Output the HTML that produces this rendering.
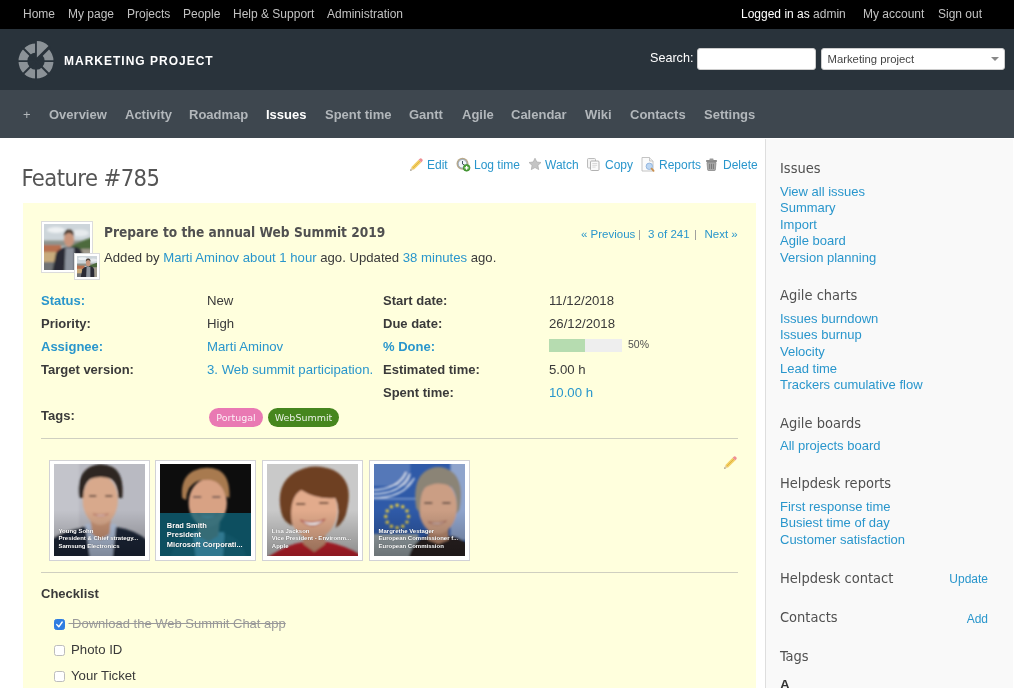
<!DOCTYPE html>
<html><head><meta charset="utf-8">
<style>
*{box-sizing:border-box}
html,body{margin:0;padding:0}
body{will-change:transform;width:1014px;height:688px;overflow:hidden;background:#fff;font-family:"Liberation Sans",Arial,sans-serif;font-size:13px;color:#333;position:relative}
a{color:#2996cc;text-decoration:none}
#top{position:absolute;left:0;top:0;width:1014px;height:29px;background:#000;color:#fff;font-size:12px}
#top a{color:#c2c2c2;position:absolute;top:7px;white-space:nowrap}
#top span{position:absolute;top:7px;white-space:nowrap}
#hdr{position:absolute;left:0;top:29px;width:1014px;height:61px;background:#29333b}
#hdr h1{position:absolute;left:64px;top:25px;margin:0;font-size:12px;font-weight:bold;color:#fff;letter-spacing:1px;white-space:nowrap;line-height:15px}
#menu{position:absolute;left:0;top:90px;width:1014px;height:48px;background:#3e474f}
#menu a{position:absolute;top:17px;color:#b2b7bb;font-weight:bold;font-size:13px;white-space:nowrap;line-height:16px}
#menu a.sel{color:#fff}
#side{position:absolute;left:765px;top:139px;width:248px;height:550px;background:#f9f9f9;border-left:1px solid #dedede}
#side h3{position:absolute;left:14px;margin:0;font-weight:normal;font-size:14.5px;color:#505050;white-space:nowrap;line-height:18px;font-family:"DejaVu Sans Condensed","Liberation Sans",sans-serif}
#side a{position:absolute;left:14px;font-size:13px;white-space:nowrap;line-height:16px}
h2{position:absolute;left:21.5px;top:163px;margin:0;font-weight:normal;font-size:23.5px;letter-spacing:-0.55px;color:#555;line-height:30px;font-family:"DejaVu Sans Condensed","Liberation Sans",sans-serif;white-space:nowrap}
#ctx a{position:absolute;top:158px;font-size:12px;white-space:nowrap;line-height:15px}
#issue{position:absolute;left:23px;top:203px;width:733px;height:485px;background:#ffffdd}
.abs{position:absolute;white-space:nowrap}
.lbl{font-weight:bold;font-size:13px;line-height:16px;color:#3a3a3a}
.val{font-size:13.2px;line-height:16px;color:#3a3a3a}
.tag{height:19.5px;border-radius:10px;color:rgba(255,255,255,.88);font-family:"DejaVu Sans",sans-serif;font-size:9.5px;line-height:20px;text-align:center}
.hr{left:18px;width:697px;height:1px;background:#cfcfc0}
.th{position:absolute;top:256.5px;width:100.5px;height:101px;background:#fff;border:1px solid #d2d2d6;padding:3.5px}
.th .ph{width:91.5px;height:92px;background:#999;overflow:hidden}
.th .cap{position:absolute;left:8.5px;bottom:9.5px;color:#fff;font-weight:bold;font-size:6px;line-height:7.5px;white-space:nowrap;text-shadow:0 0 1px rgba(0,0,0,.5)}
.cb{left:30.5px;width:11px;height:11px;border:1px solid #bdbdbd;border-radius:2.5px;background:#fff}
.cb.on{background:#2f7de1;border-color:#2f7de1}
.ic{position:absolute;display:block}
.nav{top:24px;font-size:11.5px;line-height:14px}
</style></head><body>
<div id="top">
<a style="left:23px">Home</a><a style="left:68px">My page</a><a style="left:127px">Projects</a><a style="left:183px">People</a><a style="left:233px">Help &amp; Support</a><a style="left:327px">Administration</a>
<span style="left:741px">Logged in as <a style="position:static">admin</a></span><a style="left:863px">My account</a><a style="left:938px">Sign out</a>
</div>
<div id="hdr">
<svg style="position:absolute;left:14px;top:10px" width="44" height="44" viewBox="-22 -22.1 44 44">
<path d="M12.37,-12.37 A17.5,17.5 0 0 1 17.50,-0.00 L8.70,-0.00 A8.7,8.7 0 0 0 6.15,-6.15 Z M17.50,-0.00 A17.5,17.5 0 0 1 12.37,12.37 L6.15,6.15 A8.7,8.7 0 0 0 8.70,-0.00 Z M12.37,12.37 A17.5,17.5 0 0 1 0.00,17.50 L0.00,8.70 A8.7,8.7 0 0 0 6.15,6.15 Z M0.00,17.50 A17.5,17.5 0 0 1 -12.37,12.37 L-6.15,6.15 A8.7,8.7 0 0 0 0.00,8.70 Z M-12.37,12.37 A17.5,17.5 0 0 1 -17.50,0.00 L-8.70,0.00 A8.7,8.7 0 0 0 -6.15,6.15 Z M-17.50,0.00 A17.5,17.5 0 0 1 -12.37,-12.37 L-6.15,-6.15 A8.7,8.7 0 0 0 -8.70,0.00 Z M-12.37,-12.37 A17.5,17.5 0 0 1 -0.00,-17.50 L-0.00,-8.70 A8.7,8.7 0 0 0 -6.15,-6.15 Z" fill="#8b9297"/>
<g stroke="#29333b" stroke-width="1.9"><line x1="0.00" y1="-20.00" x2="-0.00" y2="20.00"/><line x1="14.14" y1="-14.14" x2="-14.14" y2="14.14"/><line x1="20.00" y1="-0.00" x2="-20.00" y2="0.00"/><line x1="14.14" y1="14.14" x2="-14.14" y2="-14.14"/></g>
<path d="M0.90,-3.60 L0.90,-20.00 A16.4,16.4 0 0 1 12.50,-15.20 Z" fill="#8b9297"/>
</svg>
<h1>MARKETING PROJECT</h1>
<div class="abs" style="left:650px;top:21px;color:#fff;font-size:12.6px;line-height:16px">Search:</div>
<div class="abs" style="left:697px;top:19px;width:119px;height:22px;background:#fff;border-radius:3px;border:1px solid #ccc"></div>
<div class="abs" style="left:820.5px;top:19px;width:184px;height:22px;background:#fff;border-radius:3px;border:1px solid #ccc;font-size:11.3px;color:#444;padding:3px 0 0 6px;line-height:14px">Marketing project</div>
<div class="abs" style="left:991px;top:28px;width:0;height:0;border-left:4px solid transparent;border-right:4px solid transparent;border-top:4.5px solid #888"></div>
</div>
<div id="menu">
<a style="left:23px;font-weight:normal">+</a><a style="left:49px">Overview</a><a style="left:125px">Activity</a><a style="left:189px">Roadmap</a><a class="sel" style="left:266px">Issues</a><a style="left:325px">Spent time</a><a style="left:409px">Gantt</a><a style="left:462px">Agile</a><a style="left:511px">Calendar</a><a style="left:585px">Wiki</a><a style="left:630px">Contacts</a><a style="left:704px">Settings</a>
</div>
<h2>Feature #785</h2>
<div id="ctx">
<svg class="ic" style="left:409px;top:157px" width="15" height="15" viewBox="0 0 15 15"><path d="M2.2,10.2 L9.6,2.8 L12.2,5.4 L4.8,12.8 Z" fill="#f3cf62"/><path d="M9.6,2.8 L11,1.4 Q11.9,0.8 12.8,1.7 L13.3,2.2 Q14.1,3.1 13.5,4 L12.2,5.4 Z" fill="#ee8f94"/><path d="M2.2,10.2 L4.8,12.8 L1.2,13.8 Z" fill="#e8d3a8"/><path d="M1.2,13.8 L1.7,12.2 L2.8,13.3Z" fill="#666"/><path d="M3.5,11.5 L10.9,4.1" stroke="#d9a93a" stroke-width=".8"/></svg>
<svg class="ic" style="left:456px;top:157px" width="15" height="15" viewBox="0 0 15 15"><circle cx="6.5" cy="6.8" r="6" fill="#b9a98a"/><circle cx="6.5" cy="6.8" r="4.3" fill="#f2f6fa" stroke="#8fa5c0" stroke-width=".8"/><path d="M6.5,4 V7 L8.5,8" stroke="#456" stroke-width="1" fill="none"/><circle cx="10.6" cy="10.8" r="3.4" fill="#4da33a" stroke="#2f7d22" stroke-width=".6"/><path d="M10.6,8.9 V12.7 M8.7,10.8 H12.5" stroke="#fff" stroke-width="1.3"/></svg>
<svg class="ic" style="left:528px;top:157px" width="14" height="14" viewBox="0 0 14 14"><path d="M7,1.2 L8.8,5 L13,5.5 L9.9,8.4 L10.7,12.6 L7,10.5 L3.3,12.6 L4.1,8.4 L1,5.5 L5.2,5 Z" fill="#c4c4c4" stroke="#aaa" stroke-width=".7" stroke-linejoin="round"/></svg>
<svg class="ic" style="left:586px;top:157px" width="15" height="15" viewBox="0 0 15 15"><rect x="1.5" y="1.5" width="8" height="9.5" rx="1" fill="#f4f4f4" stroke="#b5b5b5" stroke-width=".9"/><rect x="4.5" y="4" width="8.5" height="9.5" rx="1" fill="#fafafa" stroke="#a9a9a9" stroke-width=".9"/><path d="M6.3,6.5 H11.2 M6.3,8.3 H11.2 M6.3,10.1 H9.5" stroke="#d0d0d0" stroke-width=".8"/></svg>
<svg class="ic" style="left:640px;top:156px" width="16" height="17" viewBox="0 0 16 17"><path d="M2,1.5 H9.5 L13,5 V15 H2 Z" fill="#fbfbfb" stroke="#bdbdbd" stroke-width=".9"/><path d="M9.5,1.5 V5 H13" fill="#eee" stroke="#bdbdbd" stroke-width=".8"/><circle cx="9.3" cy="10.3" r="3.2" fill="#bcd6f2" stroke="#8fb2dc" stroke-width=".9"/><path d="M11.6,12.7 L13.6,14.9" stroke="#c98f4e" stroke-width="1.8" stroke-linecap="round"/></svg>
<svg class="ic" style="left:705px;top:158px" width="13" height="13" viewBox="0 0 13 13"><rect x="1" y="2" width="11" height="2" rx=".8" fill="#8a8a8a"/><rect x="4.5" y=".6" width="4" height="1.8" rx=".6" fill="#999"/><path d="M2,4.5 H11 L10.3,12 Q10.2,12.5 9.6,12.5 H3.4 Q2.8,12.5 2.7,12 Z" fill="#a9a9a9" stroke="#808080" stroke-width=".7"/><path d="M4.6,5.8 V11 M6.5,5.8 V11 M8.4,5.8 V11" stroke="#6f6f6f" stroke-width=".8"/></svg>

<a style="left:427px">Edit</a><a style="left:474px">Log time</a><a style="left:545px">Watch</a><a style="left:605px">Copy</a><a style="left:659px">Reports</a><a style="left:723px">Delete</a>
</div>
<div id="issue">
<!-- avatar -->
<div class="abs" style="left:18px;top:18px;width:52px;height:52px;background:#fff;border:1px solid #dcdcdc;padding:2px">
<svg width="46" height="46" viewBox="0 0 46 46" style="display:block"><defs><filter id="bl"><feGaussianBlur stdDeviation="0.8"/></filter></defs>
<rect width="46" height="46" fill="#cdd5da"/>
<g filter="url(#bl)">
<ellipse cx="12" cy="6" rx="9" ry="3" fill="#eef1f3"/><ellipse cx="36" cy="9" rx="9" ry="3.5" fill="#e6eaed"/>
<rect x="-3" y="16.5" width="52" height="6" fill="#8f938d"/>
<path d="M27,22 Q36,17 49,13 L49,26 L27,26 Z" fill="#4d6b3e"/>
<rect x="-3" y="21" width="20" height="9" fill="#b86f50"/>
<rect x="-3" y="28" width="16" height="12" fill="#c8ab7c"/>
<rect x="-3" y="38" width="16" height="11" fill="#6f7274"/>
<rect x="36" y="25" width="13" height="24" fill="#a09a8c"/>
<path d="M8,49 L12,29 Q16,23.5 23,23 L33,23 Q38,25 38.5,30 L39,49 Z" fill="#2a2c34"/>
<path d="M21.5,24 L20.5,49 L30,49 L30,24 Z" fill="#8d939d"/>
<ellipse cx="25" cy="15.5" rx="5" ry="7" fill="#c9957c"/>
<path d="M19.8,12.5 Q19.5,5.5 25,5.5 Q30.8,5.5 30.2,12.5 Q28,9 25,9 Q22,9 19.8,12.5Z" fill="#4a3a30"/>
</g></svg></div>
<div class="abs" style="left:51px;top:50px;width:26px;height:26.5px;background:#fff;border:1px solid #dcdcdc;padding:1.75px">
<svg width="20.5" height="21" viewBox="0 0 46 46" preserveAspectRatio="none" style="display:block">
<rect width="46" height="46" fill="#cdd5da"/>
<defs><filter id="bl2"><feGaussianBlur stdDeviation="1.6"/></filter></defs><g filter="url(#bl2)">
<ellipse cx="12" cy="6" rx="9" ry="3" fill="#eef1f3"/><ellipse cx="36" cy="9" rx="9" ry="3.5" fill="#e6eaed"/>
<rect x="-3" y="16.5" width="52" height="6" fill="#8f938d"/>
<path d="M27,22 Q36,17 49,13 L49,26 L27,26 Z" fill="#4d6b3e"/>
<rect x="-3" y="21" width="20" height="9" fill="#b86f50"/>
<rect x="-3" y="28" width="16" height="12" fill="#c8ab7c"/>
<rect x="-3" y="38" width="16" height="11" fill="#6f7274"/>
<rect x="36" y="25" width="13" height="24" fill="#a09a8c"/>
<path d="M8,49 L12,29 Q16,23.5 23,23 L33,23 Q38,25 38.5,30 L39,49 Z" fill="#2a2c34"/>
<path d="M21.5,24 L20.5,49 L30,49 L30,24 Z" fill="#8d939d"/>
<ellipse cx="25" cy="15.5" rx="5" ry="7" fill="#c9957c"/>
<path d="M19.8,12.5 Q19.5,5.5 25,5.5 Q30.8,5.5 30.2,12.5 Q28,9 25,9 Q22,9 19.8,12.5Z" fill="#4a3a30"/>
</g></svg></div>
<div class="abs" style="left:81px;top:20px;font-family:'DejaVu Sans Condensed','Liberation Sans',sans-serif;font-weight:bold;font-size:13.6px;color:#505050;line-height:18px">Prepare to the annual Web Summit 2019</div>
<div class="abs" style="left:81px;top:47px;font-size:13.15px;line-height:16px;color:#3a3a3a">Added by <a>Marti Aminov</a> <a>about 1 hour</a> ago. Updated <a>38 minutes</a> ago.</div>
<div class="abs nav" style="left:558px"><a>« Previous</a></div><div class="abs nav" style="left:615px;color:#999">|</div><div class="abs nav" style="left:625px"><a>3 of 241</a></div><div class="abs nav" style="left:671px;color:#999">|</div><div class="abs nav" style="left:681.5px"><a>Next »</a></div>
<!-- attributes -->
<div class="abs lbl" style="left:18px;top:90px"><a>Status:</a></div><div class="abs val" style="left:184px;top:90px">New</div>
<div class="abs lbl" style="left:18px;top:113px">Priority:</div><div class="abs val" style="left:184px;top:113px">High</div>
<div class="abs lbl" style="left:18px;top:136px"><a>Assignee:</a></div><div class="abs val" style="left:184px;top:136px"><a>Marti Aminov</a></div>
<div class="abs lbl" style="left:18px;top:159px">Target version:</div><div class="abs val" style="left:184px;top:159px"><a>3. Web summit participation.</a></div>
<div class="abs lbl" style="left:18px;top:205px">Tags:</div>
<div class="abs lbl" style="left:360px;top:90px">Start date:</div><div class="abs val" style="left:526px;top:90px">11/12/2018</div>
<div class="abs lbl" style="left:360px;top:113px">Due date:</div><div class="abs val" style="left:526px;top:113px">26/12/2018</div>
<div class="abs lbl" style="left:360px;top:136px"><a>% Done:</a></div>
<div class="abs" style="left:525.5px;top:135.5px;width:73.5px;height:13px;background:#eee"><div style="width:36.5px;height:13px;background:#b6dcb0"></div></div>
<div class="abs" style="left:605px;top:135px;font-size:10.5px;line-height:12px;color:#505050">50%</div>
<div class="abs lbl" style="left:360px;top:159px">Estimated time:</div><div class="abs val" style="left:526px;top:159px">5.00 h</div>
<div class="abs lbl" style="left:360px;top:182px">Spent time:</div><div class="abs val" style="left:526px;top:182px"><a>10.00 h</a></div>
<div class="abs tag" style="left:186px;top:204.5px;width:54px;background:#e979b3">Portugal</div>
<div class="abs tag" style="left:245px;top:204.5px;width:71px;background:#46861e">WebSummit</div>
<div class="abs hr" style="top:235px"></div>
<!-- thumbs -->
<svg class="ic" style="left:700px;top:251.5px" width="15" height="15" viewBox="0 0 15 15"><path d="M2.2,10.2 L9.6,2.8 L12.2,5.4 L4.8,12.8 Z" fill="#f3cf62"/><path d="M9.6,2.8 L11,1.4 Q11.9,0.8 12.8,1.7 L13.3,2.2 Q14.1,3.1 13.5,4 L12.2,5.4 Z" fill="#ee8f94"/><path d="M2.2,10.2 L4.8,12.8 L1.2,13.8 Z" fill="#e8d3a8"/><path d="M1.2,13.8 L1.7,12.2 L2.8,13.3Z" fill="#666"/><path d="M3.5,11.5 L10.9,4.1" stroke="#d9a93a" stroke-width=".8"/></svg>
<div class="th" style="left:26px"><div class="ph"><svg width="91.5" height="92" viewBox="0 0 91 92" preserveAspectRatio="none" style="display:block"><defs><filter id="b2" x="-10%" y="-10%" width="120%" height="120%"><feGaussianBlur stdDeviation="1.1"/></filter><linearGradient id="dk" x1="0" y1="0" x2="0" y2="1"><stop offset=".5" stop-color="#000" stop-opacity="0"/><stop offset="1" stop-color="#000" stop-opacity=".3"/></linearGradient></defs>
<rect width="91" height="92" fill="#b9bac2"/>
<g filter="url(#b2)">
<rect x="-5" y="-5" width="30" height="80" fill="#c3c4cb"/>
<path d="M-4,96 L-4,76 Q10,66 30,63 L62,63 Q82,66 95,78 L95,96 Z" fill="#1e2638"/>
<path d="M31,60 L36,96 L58,96 L62,60 Z" fill="#b4c3dc"/>
<path d="M36,52 L38,70 L46,76 L55,70 L57,52 Z" fill="#c99476"/>
<ellipse cx="46" cy="36" rx="17.5" ry="25" fill="#d8a98c"/>
<path d="M25,34 Q22,12 34,4 Q46,-3 58,3 Q70,9 68,34 L64,34 Q64,20 57,15 Q46,11 36,15 Q29,20 29,34 Z" fill="#2d2522"/>
<path d="M39,50 Q46.5,55 54,50 Q46.5,52 39,50Z" fill="#fff" stroke="#b46a5a" stroke-width=".8"/>
<path d="M35,32 h7 M51,32 h7" stroke="#4a342c" stroke-width="1.4"/>
</g><rect width="91" height="92" fill="url(#dk)"/></svg></div><div class="cap">Young Sohn<br>President &amp; Chief strategy...<br>Samsung Electronics</div></div>
<div class="th" style="left:132.3px"><div class="ph"><svg width="91.5" height="92" viewBox="0 0 91 92" preserveAspectRatio="none" style="display:block">
<rect width="91" height="92" fill="#0d0d0d"/>
<g filter="url(#b2)">
<path d="M10,96 Q14,74 34,70 L64,70 Q82,74 86,96 Z" fill="#23262c"/>
<path d="M33,68 L36,96 L62,96 L64,68 Z" fill="#a9c4e2"/>
<path d="M37,54 L38,72 L48,78 L58,72 L60,54 Z" fill="#c48c70"/>
<ellipse cx="47.5" cy="39" rx="19" ry="24" fill="#d8a284"/>
<path d="M22,34 Q20,14 33,7 Q46,1 58,6 Q70,12 69,34 L65,32 Q62,18 50,16 Q36,14 29,24 Q26,30 26,36 Z" fill="#a87a50"/>
<path d="M37,50 Q47,59 58,50 Q47,54 37,50Z" fill="#fff" stroke="#a85c4c" stroke-width=".8"/>
<path d="M33,33 h8 M52,33 h8" stroke="#5a4a48" stroke-width="1.4"/>
</g><rect x="0" y="49" width="91" height="43" fill="#0e6378" fill-opacity=".78"/></svg></div><div class="cap" style="font-size:7.5px;line-height:9.3px;bottom:10.5px;left:10.5px">Brad Smith<br>President<br>Microsoft Corporati...</div></div>
<div class="th" style="left:239.3px"><div class="ph"><svg width="91.5" height="92" viewBox="0 0 91 92" preserveAspectRatio="none" style="display:block">
<rect width="91" height="92" fill="#c9c9c9"/>
<g filter="url(#b2)">
<path d="M-4,96 Q20,80 36,78 L60,78 Q80,82 95,92 L95,96 Z" fill="#c9242d"/>
<path d="M36,64 L36,80 L47,88 L58,80 L58,64 Z" fill="#d19a7c"/>
<ellipse cx="46" cy="46" rx="24" ry="29" fill="#e2ab8c"/>
<path d="M14,48 Q8,20 28,8 Q46,-2 66,6 Q86,16 80,44 Q78,58 68,64 Q74,46 68,34 Q50,36 34,26 Q24,32 24,50 Q24,58 26,62 Q16,58 14,48 Z" fill="#6e4024"/>
<path d="M33,56 Q46,68 58,55 Q46,61 33,56Z" fill="#fff" stroke="#b4524a" stroke-width="1"/>
<path d="M29,40 h9 M52,39 h9" stroke="#4a2c20" stroke-width="1.5"/>
</g><rect width="91" height="92" fill="url(#dk)"/></svg></div><div class="cap">Lisa Jackson<br>Vice President - Environm...<br>Apple</div></div>
<div class="th" style="left:346px"><div class="ph"><svg width="91.5" height="92" viewBox="0 0 91 92" preserveAspectRatio="none" style="display:block">
<rect width="91" height="92" fill="#2f5aa8"/>
<g filter="url(#b2)">
<rect x="76" y="-4" width="20" height="80" fill="#8fa4cc"/>
<rect x="-4" y="-4" width="40" height="26" fill="#5578b8"/>
<path d="M-2,26 Q24,26 32,8 M-2,30 Q28,30 36,10 M-2,34 Q30,34 40,14" stroke="#dfe6f0" stroke-width="1.6" fill="none"/>
<rect x="-4" y="70" width="48" height="26" fill="#9aa5aa"/>
<rect x="-4" y="34" width="50" height="1.5" fill="#7f9ccc"/>
<circle cx="23.0" cy="41.2" r="1.7" fill="#f1d23c"/><circle cx="28.6" cy="42.7" r="1.7" fill="#f1d23c"/><circle cx="32.8" cy="46.9" r="1.7" fill="#f1d23c"/><circle cx="34.3" cy="52.5" r="1.7" fill="#f1d23c"/><circle cx="32.8" cy="58.1" r="1.7" fill="#f1d23c"/><circle cx="28.6" cy="62.3" r="1.7" fill="#f1d23c"/><circle cx="23.0" cy="63.8" r="1.7" fill="#f1d23c"/><circle cx="17.3" cy="62.3" r="1.7" fill="#f1d23c"/><circle cx="13.2" cy="58.2" r="1.7" fill="#f1d23c"/><circle cx="11.7" cy="52.5" r="1.7" fill="#f1d23c"/><circle cx="13.2" cy="46.9" r="1.7" fill="#f1d23c"/><circle cx="17.3" cy="42.7" r="1.7" fill="#f1d23c"/>
<path d="M34,96 Q38,76 54,72 L78,72 Q92,76 95,84 L95,96 Z" fill="#2a2220"/>
<path d="M54,60 L54,76 L64,80 L74,76 L74,60 Z" fill="#b98a70"/>
<ellipse cx="63.5" cy="43" rx="19" ry="27" fill="#cb9e84"/>
<path d="M42,44 Q38,18 50,8 Q64,-2 78,8 Q90,18 85,46 L82,50 Q84,30 76,22 Q62,16 50,24 Q45,32 46,50 Z" fill="#8b8476"/>
<path d="M54,58 Q63,64 72,57 Q63,60 54,58Z" fill="#e9d8d0" stroke="#9a5a4c" stroke-width=".8"/>
<path d="M50,39 h8 M68,39 h8" stroke="#4a3a34" stroke-width="1.4"/>
</g><rect width="91" height="92" fill="url(#dk)"/></svg></div><div class="cap">Margrethe Vestager<br>European Commissioner f...<br>European Commission</div></div>
<div class="abs hr" style="top:369px"></div>
<div class="abs lbl" style="left:18px;top:383px">Checklist</div>
<div class="abs cb on" style="top:416px"><svg width="9" height="9" viewBox="0 0 9 9" style="display:block"><path d="M1.8,4.6 L3.8,6.8 L7.2,2" stroke="#fff" stroke-width="1.4" fill="none" stroke-linecap="round" stroke-linejoin="round"/></svg></div><div class="abs val" style="left:45.5px;top:413px;color:#999;font-size:13px;text-decoration:line-through">&nbsp;Download the Web Summit Chat app</div>
<div class="abs cb" style="top:442px"></div><div class="abs val" style="left:48px;top:439px">Photo ID</div>
<div class="abs cb" style="top:468px"></div><div class="abs val" style="left:48px;top:465px">Your Ticket</div>
</div>
<div id="side">
<h3 style="top:20px">Issues</h3>
<a style="top:45px">View all issues</a><a style="top:61px">Summary</a><a style="top:78px">Import</a><a style="top:94px">Agile board</a><a style="top:111px">Version planning</a>
<h3 style="top:147px">Agile charts</h3>
<a style="top:172px">Issues burndown</a><a style="top:188px">Issues burnup</a><a style="top:205px">Velocity</a><a style="top:222px">Lead time</a><a style="top:238px">Trackers cumulative flow</a>
<h3 style="top:275px">Agile boards</h3>
<a style="top:299px">All projects board</a>
<h3 style="top:335px">Helpdesk reports</h3>
<a style="top:360px">First response time</a><a style="top:376px">Busiest time of day</a><a style="top:393px">Customer satisfaction</a>
<h3 style="top:430px">Helpdesk contact</h3><a style="left:auto;right:25px;top:432px;font-size:12px">Update</a>
<h3 style="top:469px">Contacts</h3><a style="left:auto;right:25px;top:472px;font-size:12px">Add</a>
<h3 style="top:508px">Tags</h3>
<div class="abs" style="left:14px;top:538px;font-weight:bold;font-size:13.5px;color:#333">A</div>
</div>
</body></html>
